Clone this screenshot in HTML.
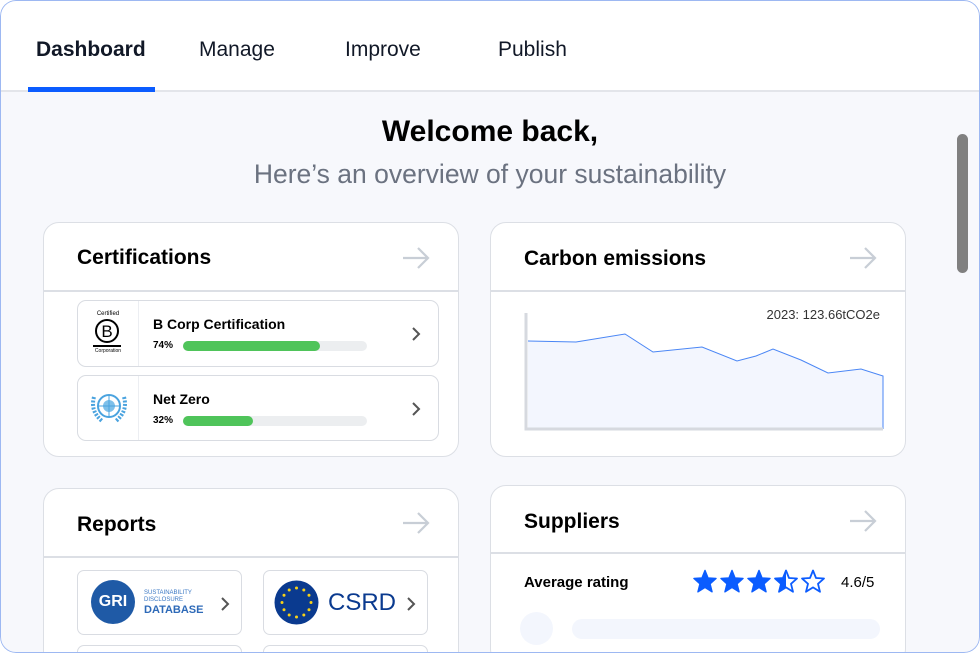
<!DOCTYPE html>
<html style="overflow:hidden"><head><meta charset="utf-8"><style>
*{box-sizing:border-box;margin:0;padding:0}
body{width:980px;height:653px;overflow:hidden;font-family:"Liberation Sans",sans-serif;background:#fff;position:relative}
.frame{position:absolute;left:0;top:0;width:980px;height:653px;overflow:hidden;background:#f7f8fc;border-radius:16px}
.bord{position:absolute;left:0;top:0;width:980px;height:653px;border:1.5px solid #9db8f2;border-radius:16px;pointer-events:none}
.nav{position:absolute;left:0;top:0;width:980px;height:92px;background:#fff;border-bottom:2px solid #e3e5ea}
.nav span{position:absolute;top:38px;font-size:21px;color:#111827}
.ul{position:absolute;left:28px;top:87px;width:127px;height:5px;background:#0b5cff}
.card{position:absolute;background:#fff;border:1.5px solid #dcdfe5;border-radius:16px}
.card h2{position:absolute;left:33px;font-size:21px;font-weight:bold;color:#000}
.hl{position:absolute;left:0;right:0;height:1.5px;background:#dcdfe5}
.arr{position:absolute;right:28px}
.item{position:absolute;left:33px;width:362px;height:67px;border:1px solid #d9dce2;border-radius:9px;background:#fff}
.item .div{position:absolute;left:60px;top:0;bottom:0;width:1px;background:#eceef2}
.item b{position:absolute;left:75px;top:15px;font-size:14px}
.item i{position:absolute;left:75px;top:39px;font-size:10px;font-weight:bold;font-style:normal}
.bar{position:absolute;left:105px;top:40px;width:184px;height:10px;background:#eceef0;border-radius:5px}
.bar div{height:10px;background:#4fc45a;border-radius:5px}
.chev{position:absolute;right:17px;top:26px}
.rep{position:absolute;width:165px;height:65px;border:1px solid #d9dce2;border-radius:7px;background:#fff}
</style></head><body>
<div class="frame">
<div class="nav">
<span style="left:36px;font-weight:bold">Dashboard</span>
<span style="left:199px">Manage</span>
<span style="left:345px">Improve</span>
<span style="left:498px">Publish</span>
<div class="ul"></div>
</div>
<div style="position:absolute;left:0;width:980px;top:115px;text-align:center;font-size:30px;font-weight:bold">Welcome back,</div>
<div style="position:absolute;left:0;width:980px;top:159px;text-align:center;font-size:26.5px;color:#6b7280">Here’s an overview of your sustainability</div>
<div style="position:absolute;left:957px;top:134px;width:11px;height:139px;background:#808080;border-radius:6px"></div>

<svg width="0" height="0" style="position:absolute"><defs>
<symbol id="ar" viewBox="0 0 28 22"><path d="M1 11H26M16 1L26 11 16 21" fill="none" stroke="#c8ced6" stroke-width="2.2"/></symbol>
<symbol id="ch" viewBox="0 0 10 14"><path d="M2 1L8 7 2 13" fill="none" stroke="#555" stroke-width="2"/></symbol>
</defs></svg>

<div class="card" style="left:43px;top:222px;width:416px;height:235px">
<h2 style="top:23px">Certifications</h2>
<svg class="arr" style="top:24px" width="28" height="22"><use href="#ar"/></svg>
<div class="hl" style="top:67px"></div>
<div class="item" style="top:77px">
<div style="position:absolute;left:8px;top:10px;width:44px;text-align:center;font-size:6px">Certified</div>
<div style="position:absolute;left:17px;top:18px;width:24px;height:24px;border:2px solid #000;border-radius:50%;font-size:17px;text-align:center;line-height:21px">B</div>
<div style="position:absolute;left:15px;top:44px;width:28px;height:1.5px;background:#000"></div>
<div style="position:absolute;left:8px;top:47px;width:44px;text-align:center;font-size:5px">Corporation</div>
<div class="div"></div><b>B Corp Certification</b><i>74%</i><div class="bar"><div style="width:137px"></div></div>
<svg class="chev" width="10" height="14"><use href="#ch"/></svg></div>
<div class="item" style="top:152px;height:66px">
<svg style="position:absolute;left:10px;top:13px" width="42" height="38" viewBox="0 0 42 38"><circle cx="21" cy="17" r="11" fill="none" stroke="#4aa3df" stroke-width="2"/><circle cx="21" cy="17" r="6" fill="#7ec0ea"/><path d="M21 6V28M10 17H32" stroke="#4aa3df"/><path d="M6 8Q2 22 14 32M36 8Q40 22 28 32" fill="none" stroke="#4aa3df" stroke-width="4" stroke-dasharray="2 1.5"/></svg>
<div class="div"></div><b>Net Zero</b><i>32%</i><div class="bar"><div style="width:70px"></div></div>
<svg class="chev" width="10" height="14"><use href="#ch"/></svg></div>
</div>

<div class="card" style="left:490px;top:222px;width:416px;height:235px">
<h2 style="top:24px">Carbon emissions</h2>
<svg class="arr" style="top:24px" width="28" height="22"><use href="#ar"/></svg>
<div class="hl" style="top:67px"></div>
<div style="position:absolute;right:25px;top:84px;font-size:13px;color:#333">2023: 123.66tCO2e</div>
<svg style="position:absolute;left:0;top:0" width="416" height="235">
<path d="M37 118L85 119L134 111L162 129L211 124L246 138L265 133L282 126L310 137L337 150L370 146L392 153V206H37Z" fill="#f3f6fe" stroke="none"/>
<path d="M37 118L85 119L134 111L162 129L211 124L246 138L265 133L282 126L310 137L337 150L370 146L392 153V206" fill="none" stroke="#4a86f5" stroke-width="1"/>
<path d="M35 90V206H392" fill="none" stroke="#d6d9df" stroke-width="3"/>
</svg>
</div>

<div class="card" style="left:43px;top:488px;width:416px;height:180px">
<h2 style="top:24px">Reports</h2>
<svg class="arr" style="top:23px" width="28" height="22"><use href="#ar"/></svg>
<div class="hl" style="top:67px"></div>
<div class="rep" style="left:33px;top:81px">
<div style="position:absolute;left:13px;top:9px;width:44px;height:44px;border-radius:50%;background:#1f5aa6;color:#fff;font-weight:bold;font-size:16px;line-height:44px;text-align:center">GRI</div>
<div style="position:absolute;left:66px;top:19px;font-size:6px;color:#3b78c4;line-height:6.5px">SUSTAINABILITY<br>DISCLOSURE</div>
<div style="position:absolute;left:66px;top:33px;font-size:11px;font-weight:bold;color:#2e6ab8">DATABASE</div>
<svg style="position:absolute;left:142px;top:26px" width="10" height="14"><use href="#ch"/></svg></div>
<div class="rep" style="left:219px;top:81px">
<svg style="position:absolute;left:10px;top:9px" width="45" height="45" viewBox="0 0 45 45"><circle cx="22.5" cy="22.5" r="22" fill="#0a3a8f"/><g fill="#f7d117"><circle cx="22.5" cy="8" r="1.5"/><circle cx="22.5" cy="37" r="1.5"/><circle cx="8" cy="22.5" r="1.5"/><circle cx="37" cy="22.5" r="1.5"/><circle cx="15.2" cy="10" r="1.5"/><circle cx="29.8" cy="10" r="1.5"/><circle cx="15.2" cy="35" r="1.5"/><circle cx="29.8" cy="35" r="1.5"/><circle cx="10" cy="15.2" r="1.5"/><circle cx="35" cy="15.2" r="1.5"/><circle cx="10" cy="29.8" r="1.5"/><circle cx="35" cy="29.8" r="1.5"/></g></svg>
<div style="position:absolute;left:64px;top:18px;font-size:24px;color:#0a3a8f">CSRD</div>
<svg style="position:absolute;left:142px;top:26px" width="10" height="14"><use href="#ch"/></svg></div>
<div class="rep" style="left:33px;top:156px"></div><div class="rep" style="left:219px;top:156px"></div>
</div>

<div class="card" style="left:490px;top:485px;width:416px;height:180px">
<h2 style="top:24px">Suppliers</h2>
<svg class="arr" style="top:24px" width="28" height="22"><use href="#ar"/></svg>
<div class="hl" style="top:66px"></div>
<div style="position:absolute;left:33px;top:88px;font-size:15px;font-weight:bold">Average rating</div>
<svg style="position:absolute;left:202px;top:83px" width="132" height="26" viewBox="0 0 132 26">
<defs><path id="st" d="M12 1.5L15 9L23 9.5L17 14.8L19 22.8L12 18.4L5 22.8L7 14.8L1 9.5L9 9Z"/><clipPath id="hf"><rect x="0" y="0" width="12" height="26"/></clipPath></defs>
<use href="#st" fill="#0b5cff" stroke="#0b5cff" stroke-width="1.5" stroke-linejoin="round"/>
<use href="#st" x="27" fill="#0b5cff" stroke="#0b5cff" stroke-width="1.5" stroke-linejoin="round"/>
<use href="#st" x="54" fill="#0b5cff" stroke="#0b5cff" stroke-width="1.5" stroke-linejoin="round"/>
<g transform="translate(81,0)"><use href="#st" fill="#0b5cff" clip-path="url(#hf)"/><use href="#st" fill="none" stroke="#0b5cff" stroke-width="1.8" stroke-linejoin="round"/></g>
<use href="#st" x="108" fill="none" stroke="#0b5cff" stroke-width="1.8" stroke-linejoin="round"/>
</svg>
<div style="position:absolute;left:350px;top:88px;font-size:15px">4.6/5</div>
<div style="position:absolute;left:29px;top:126px;width:33px;height:33px;border-radius:50%;background:#f3f6fd"></div>
<div style="position:absolute;left:81px;top:133px;width:308px;height:20px;border-radius:10px;background:#f3f6fd"></div>
</div>
<div class="bord"></div>
</div>
</body></html>
